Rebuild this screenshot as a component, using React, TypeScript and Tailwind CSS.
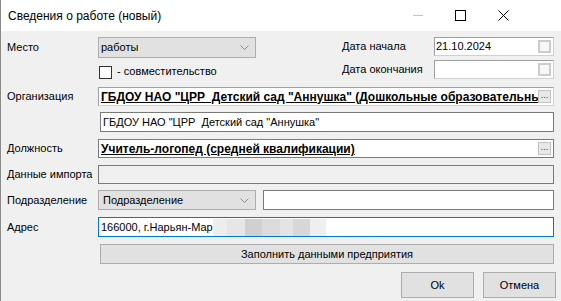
import React from 'react';

const Chevron: React.FC = () => (
  <svg width="9" height="5" viewBox="0 0 9 5" className="shrink-0">
    <polyline points="0.5,0.5 4.5,4.5 8.5,0.5" fill="none" stroke="#8a8a8a" strokeWidth="1" />
  </svg>
);

const DotsButton: React.FC = () => (
  <div className="w-[13px] h-[13px] shrink-0 border border-[#c2c2c2] bg-[#e8e8e8] flex items-end justify-center leading-none text-[9px] text-[#333] pb-[2px]">
    ...
  </div>
);

const DateBox: React.FC<{ value?: string }> = ({ value }) => (
  <div className="w-[120px] h-[19px] bg-white border border-t-[#a0a0a0] border-l-[#a0a0a0] border-r-[#d0d0d0] border-b-[#d0d0d0] flex items-center pl-[1px] pr-[2px]">
    <span className="flex-1 leading-none">{value}</span>
    <div className="w-[13px] h-[13px] border-2 border-[#cccccc] bg-[#f7f7f7]" />
  </div>
);

const Label: React.FC<{ children: React.ReactNode }> = ({ children }) => (
  <div className="w-[91px] shrink-0 whitespace-nowrap">{children}</div>
);

const App: React.FC = () => {
  return (
    <div className="w-[561px] h-[301px] overflow-hidden bg-[#f0f0f0] border-l border-[#8a8a8a] font-['Liberation_Sans',Arial,sans-serif] text-[11px] text-black">
      {/* title bar */}
      <div className="h-[31px] bg-white flex items-center pl-[7px] pr-[36px]">
        <span className="text-[12px]">Сведения о работе (новый)</span>
        <div className="ml-auto flex items-center">
          <div className="w-[43px] flex justify-center">
            <div className="w-[10px] h-px bg-[#c4c4c4]" />
          </div>
          <div className="w-[43px] flex justify-center">
            <div className="w-[11px] h-[11px] border border-black" />
          </div>
          <div className="w-[43px] flex justify-center">
            <svg width="11" height="11" viewBox="0 0 11 11">
              <path d="M0.5 0.5 L10.5 10.5 M10.5 0.5 L0.5 10.5" stroke="#000" strokeWidth="1" />
            </svg>
          </div>
        </div>
      </div>

      <div className="flex flex-col pl-[6px] pr-[7px]">
        {/* Место / Дата начала */}
        <div className="mt-[6px] flex items-center h-[21px]">
          <Label>Место</Label>
          <div className="w-[158px] h-[21px] bg-[#e1e1e1] border border-[#adadad] flex items-center pl-[2px] pr-[6px]">
            <span className="flex-1">работы</span>
            <Chevron />
          </div>
          <div className="flex-1" />
          <div className="w-[92px] -mt-[2px]">Дата начала</div>
          <div className="self-start">
            <DateBox value="21.10.2024" />
          </div>
        </div>

        {/* совместительство / Дата окончания */}
        <div className="mt-[2px] flex items-center h-[19px]">
          <div className="w-[92px] shrink-0" />
          <div className="w-[13px] h-[13px] bg-white border border-[#333] mt-[5px]" />
          <span className="ml-[5px] mt-[4px]">- совместительство</span>
          <div className="flex-1" />
          <div className="w-[92px]">Дата окончания</div>
          <DateBox />
        </div>

        {/* Организация */}
        <div className="mt-[8px] flex items-center h-[19px]">
          <Label>Организация</Label>
          <div className="flex-1 min-w-0 h-[19px] bg-white border border-t-[#a0a0a0] border-l-[#a0a0a0] border-r-[#d0d0d0] border-b-[#d0d0d0] flex items-center pl-[2px] pr-[2px] overflow-hidden">
            <span className="flex-1 min-w-0 overflow-hidden whitespace-pre font-bold underline text-[12px]">ГБДОУ НАО "ЦРР  Детский сад "Аннушка" (Дошкольные образовательные учреждения)</span>
            <DotsButton />
          </div>
        </div>

        {/* Org full name */}
        <div className="mt-[6px] flex items-center h-[20px]">
          <div className="w-[93px] shrink-0" />
          <div className="flex-1 h-[20px] bg-white border border-[#7a7a7a] flex items-center pl-[2px]">
            <span className="whitespace-pre">ГБДОУ НАО "ЦРР  Детский сад "Аннушка"</span>
          </div>
        </div>

        {/* Должность */}
        <div className="mt-[7px] flex items-center h-[19px]">
          <Label>Должность</Label>
          <div className="flex-1 h-[19px] bg-white border border-[#7a7a7a] flex items-center pl-[2px] pr-[2px]">
            <span className="flex-1 font-bold underline text-[12px]">Учитель-логопед (средней квалификации)</span>
            <DotsButton />
          </div>
        </div>

        {/* Данные импорта */}
        <div className="mt-[7px] flex items-center h-[19px]">
          <Label>Данные импорта</Label>
          <div className="flex-1 h-[19px] bg-[#f0f0f0] border border-[#7a7a7a]" />
        </div>

        {/* Подразделение */}
        <div className="mt-[6px] flex items-center h-[20px]">
          <Label>Подразделение</Label>
          <div className="w-[158px] h-[20px] bg-[#e1e1e1] border border-[#adadad] flex items-center pl-[4px] pr-[6px]">
            <span className="flex-1">Подразделение</span>
            <Chevron />
          </div>
          <div className="flex-1 ml-[7px] h-[20px] bg-white border border-[#7a7a7a]" />
        </div>

        {/* Адрес */}
        <div className="mt-[7px] flex items-center h-[20px]">
          <Label>Адрес</Label>
          <div className="flex-1 h-[20px] bg-white border border-[#0078d7] flex items-center pl-[2px]">
            <span>166000, г.Нарьян-Мар</span>
            <div className="flex h-[17px]">
              <div className="w-[14px] bg-[#ededed]" />
              <div className="w-[18px] bg-[#e6e6e6]" />
              <div className="w-[17px] bg-[#d0d0d0]" />
              <div className="w-[18px] bg-[#dcdcdc]" />
              <div className="w-[13px] bg-[#e4e4e4]" />
              <div className="w-[17px] bg-[#d7d7d7]" />
              <div className="w-[16px] bg-[#efefef]" />
            </div>
          </div>
        </div>

        {/* Заполнить */}
        <div className="mt-[7px] flex items-center h-[20px]">
          <div className="w-[93px] shrink-0" />
          <div className="flex-1 h-[20px] bg-[#e1e1e1] border border-[#adadad] flex items-center justify-center">
            Заполнить данными предприятия
          </div>
        </div>

        {/* Ok / Отмена */}
        <div className="mt-[8px] flex justify-end gap-[9px] -mr-[2px]">
          <div className="w-[73px] h-[26px] bg-[#e1e1e1] border border-[#adadad] flex items-center justify-center">Ok</div>
          <div className="w-[73px] h-[26px] bg-[#e1e1e1] border border-[#adadad] flex items-center justify-center">Отмена</div>
        </div>
      </div>
    </div>
  );
};

export default App;
